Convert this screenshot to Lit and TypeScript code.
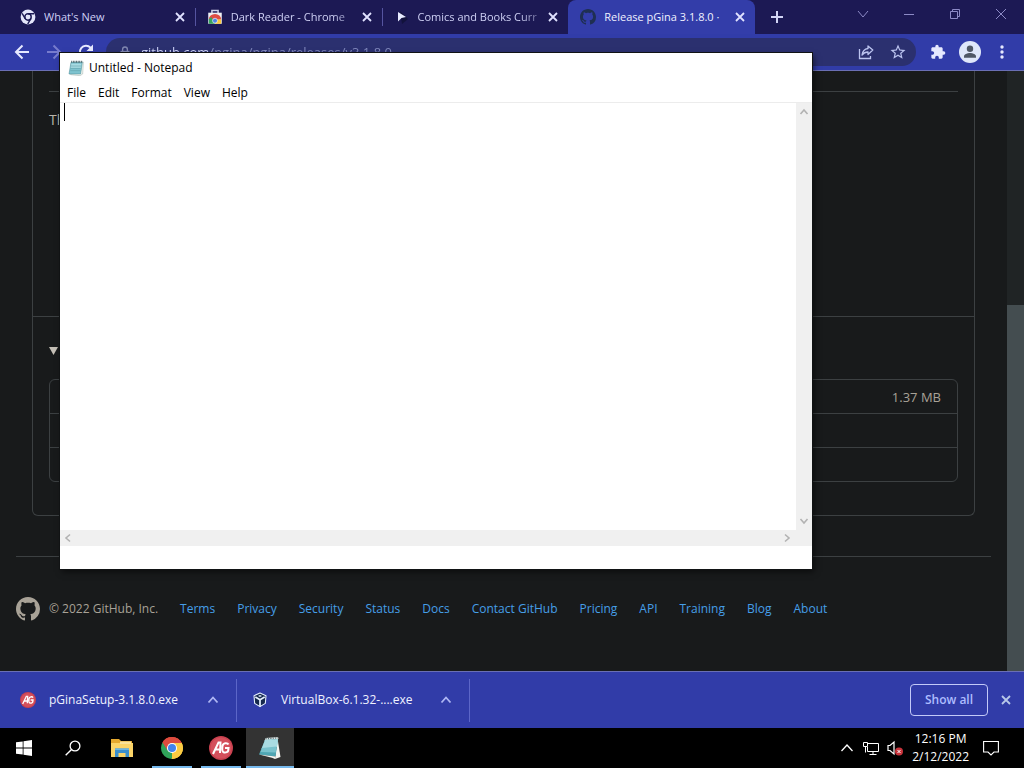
import { LitElement, html, css, svg, nothing } from "lit";
import { customElement, property } from "lit/decorators.js";
import { classMap } from "lit/directives/class-map.js";

const octocat = svg`<path fill="currentColor" fill-rule="evenodd" d="M8 0C3.58 0 0 3.58 0 8c0 3.54 2.29 6.53 5.47 7.59.4.07.55-.17.55-.38 0-.19-.01-.82-.01-1.49-2.01.37-2.53-.49-2.69-.94-.09-.23-.48-.94-.82-1.13-.28-.15-.68-.52-.01-.53.63-.01 1.08.58 1.23.82.72 1.21 1.87.87 2.33.66.07-.52.28-.87.51-1.07-1.78-.2-3.64-.89-3.64-3.95 0-.87.31-1.59.82-2.15-.08-.2-.36-1.02.08-2.12 0 0 .67-.21 2.2.82.64-.18 1.32-.27 2-.27s1.36.09 2 .27c1.53-1.04 2.2-.82 2.2-.82.44 1.1.16 1.92.08 2.12.51.56.82 1.27.82 2.15 0 3.07-1.87 3.75-3.65 3.95.29.25.54.73.54 1.48 0 1.07-.01 1.93-.01 2.2 0 .21.15.46.55.38A8.01 8.01 0 0 0 16 8c0-4.42-3.58-8-8-8z"/>`;

const pgina = svg`<circle cx="12" cy="12" r="12" fill="#c9414f"/><circle cx="12" cy="12" r="10.5" fill="#d4505c"/>
  <path fill="none" stroke="#fff" stroke-width="2" d="M4 18 9.5 6.5h2L11 17M6.5 13.5h5M19.5 8.500c-1-2-5.500-2-6 1.500-.3 2.500-1 6 1.500 6.500 2 .4 4-.5 4.200-2l.3-2.500h-3.500"/>`;

const notepad = svg`<path fill="#e4e8e6" d="M7.500 2 20 1l.500 2-14 2z"/>
  <path fill="#f4f5f1" d="m19.500 2.500 3 18.500-5.500 2z"/>
  <path fill="#4fa6b3" d="M7 4 20 3l-2.500 17.500L1 18.500z"/>
  <path fill="#a9dbe2" d="M7 4 20 3l-1 8-15.500 2z"/>
  <path fill="#79c2cd" d="m4 12 14.500-1.500-.8 6L2.500 16z"/>
  <path fill="#f7f7f2" d="m1 18.500 16.500 2L17 23l-3-1.200z"/>
  <path stroke="#566f75" stroke-width="1.300" stroke-dasharray="1.200 1.200" d="M7.500 2.800 20 1.800"/>`;

const pad = svg`<path fill="#fbfbf4" stroke="#9bb0ae" stroke-width=".8" d="m5 4 18-1-1 18-4 2.500L4 22z"/>
  <path fill="#7fc3cf" stroke="#4d8e99" stroke-width=".8" d="M4.500 3.500h17L19 21H1.500z"/>
  <path fill="#a8dbe3" d="M5 5.500h15L19 12H4z"/>
  <path stroke="#5c9aa5" stroke-width=".8" d="M4.500 9h15M4 12.500h15M3.500 16h15"/>
  <path stroke="#3d565c" stroke-width="3" stroke-dasharray="1.200 1.200" d="M5 2.500h17"/>`;

const icons: Record<string, [string, unknown]> = {
  chromeMono: ["-1 -1 26 26", svg`<circle cx="12" cy="12" r="12" fill="#e4e6fb"/><circle cx="12" cy="12" r="5.200" fill="none" stroke="#1c1a55" stroke-width="2.400"/>
    <path fill="none" stroke="#1c1a55" stroke-width="2.200" d="M12 6.700h10M7.400 14.600 2.500 6M16.500 14.700 11.500 23.500"/>`],
  chrome: ["0 0 24 24", svg`<path fill="#dd4b3e" d="M12 12 1.610 6A12 12 0 0 1 22.390 6z"/><path fill="#fbcb43" d="M12 12 22.390 6A12 12 0 0 1 12 24z"/>
    <path fill="#2fa35a" d="M12 12v12A12 12 0 0 1 1.610 6z"/><path fill="#dd4b3e" d="M12 6.500h10.650A12 12 0 0 0 1.610 6l5.630 8.750z"/>
    <path fill="#fbcb43" d="M16.760 14.750 11.440 24A12 12 0 0 0 22.650 6.500H12z"/><circle cx="12" cy="12" r="5.500" fill="#fff"/><circle cx="12" cy="12" r="4.400" fill="#4384ee"/>`],
  store: ["0 0 26 26", svg`<path fill="none" stroke="#cdd0e6" stroke-width="2.500" d="M8 7V2.500h10V7"/><path fill="#edf0f4" d="M2 6h22v18H2z"/>
    <path fill="#de4c43" d="M3 17a10 9 0 0 1 20 0l-10 1z"/><path fill="#fac93c" d="M13 17h10v7H13z"/><path fill="#36a45d" d="M3 16.500 7 13l6 11H3z"/><circle cx="13" cy="19" r="4" fill="#4e86e4" stroke="#fff"/>`],
  cursor: ["0 0 16 16", svg`<path fill="#12123c" d="m6 2 8 8-6 5z"/><path fill="#e8ebff" d="m4 3 8 5-4.500 1L4 12.500z"/>`],
  octocat: ["0 0 16 16", octocat],
  close: ["0 0 16 16", svg`<path fill="none" stroke="currentColor" stroke-width="1.800" d="m4 4 8 8m0-8-8 8"/>`],
  plus: ["0 0 16 16", svg`<path fill="none" stroke="currentColor" stroke-width="2" d="M8 2v12M2 8h12"/>`],
  down: ["0 0 16 16", svg`<path fill="none" stroke="currentColor" d="m3 5 5 6 5-6"/>`],
  min: ["0 0 16 16", svg`<path fill="none" stroke="currentColor" d="M3 8.500h10"/>`],
  restore: ["0 0 16 16", svg`<path fill="none" stroke="currentColor" d="M3.500 5.500h7v7h-7zM5.500 5.500v-2h7v7h-2"/>`],
  exit: ["0 0 16 16", svg`<path fill="none" stroke="currentColor" d="m3 3 10 10m0-10L3 13"/>`],
  back: ["0 0 16 16", svg`<path fill="none" stroke="currentColor" stroke-width="2" d="M15 8H2m6.500-6.500L2 8l6.500 6.500"/>`],
  forward: ["0 0 16 16", svg`<path fill="none" stroke="currentColor" stroke-width="2" d="M1 8h13M7.500 1.500 14 8l-6.500 6.500"/>`],
  reload: ["0 0 16 16", svg`<path fill="none" stroke="currentColor" stroke-width="2" d="M13.700 10.500A6.200 6.200 0 1 1 12.500 3.600L14 5.500"/><path fill="currentColor" d="M15 .5V7H8.500z"/>`],
  lock: ["0 0 16 16", svg`<path fill="none" stroke="currentColor" stroke-width="1.800" d="M4.800 7V4.500a3.200 3.200 0 0 1 6.400 0V7"/><path fill="currentColor" d="M2 6.500h12V15H2z"/>`],
  share: ["0 0 16 16", svg`<path fill="none" stroke="currentColor" stroke-width="1.300" d="M1.500 5v9.500h11V12"/><path fill="none" stroke="currentColor" stroke-width="1.300" stroke-linejoin="round" d="M10 2v2.500C6.500 5 4.500 7.500 4 11c1.500-2 3.500-3 6-3v2.500L14.800 6z"/>`],
  star: ["0 0 24 24", svg`<path fill="currentColor" d="m22 9.240-7.190-.62L12 2 9.190 8.630 2 9.240l5.460 4.730L5.820 21 12 17.270 18.180 21l-1.630-7.030zM12 15.400l-3.760 2.270 1-4.280-3.320-2.880 4.380-.38L12 6.100l1.710 4.040 4.380.38-3.320 2.880 1 4.280z"/>`],
  puzzle: ["0 0 24 24", svg`<path fill="currentColor" d="M20.500 11H19V7c0-1.100-.9-2-2-2h-4V3.500a2.500 2.500 0 0 0-5 0V5H4c-1.100 0-1.990.9-1.990 2v3.800H3.500c1.490 0 2.700 1.210 2.700 2.700s-1.210 2.700-2.700 2.700H2V20c0 1.100.9 2 2 2h3.800v-1.500c0-1.490 1.210-2.700 2.700-2.700s2.700 1.210 2.700 2.700V22H17c1.100 0 2-.9 2-2v-4h1.500a2.500 2.500 0 0 0 0-5z"/>`],
  avatar: ["0 0 22 22", svg`<circle cx="11" cy="11" r="11" fill="#dfe7fa"/><circle cx="11" cy="7.800" r="3.200" fill="#505866"/><path fill="#505866" d="M5 16.800v-1.500c0-2 3.500-3.300 6-3.300s6 1.300 6 3.300v1.500z"/>`],
  dots: ["0 0 16 16", svg`<g fill="currentColor"><circle cx="8" cy="3" r="1.700"/><circle cx="8" cy="8" r="1.700"/><circle cx="8" cy="13" r="1.700"/></g>`],
  notepad: ["0 0 24 24", notepad],
  pad: ["0 0 24 24", pad],
  pgina: ["0 0 24 24", pgina],
  box: ["0 0 24 24", svg`<path fill="#15284c" stroke="#e6efff" stroke-width="1.600" stroke-linejoin="round" d="m12 1.500 9 4-1 11.500L12 22 4 17 3 5.500z"/><path fill="none" stroke="#e6efff" stroke-width="2.600" d="m5 7.500 7 4 7-4M12 11.500V22"/><path fill="#dce8fb" d="m9 6 3-1.500L15 6l-3 1.500z"/>`],
  up: ["0 0 16 16", svg`<path fill="none" stroke="currentColor" stroke-width="1.800" d="m3.500 10.500 4.500-5 4.500 5"/>`],
  arrow: ["0 0 12 12", svg`<path fill="none" stroke="currentColor" stroke-width="1.600" d="m2.500 8 3.500-4 3.500 4"/>`],
  windows: ["0 0 16 16", svg`<path fill="#fff" d="M0 2.300 6.700 1.400V7.600H0zM7.500 1.300 16 0v7.600H7.500zM0 8.400h6.700v6.200L0 13.700zM7.500 8.400H16V16l-8.500-1.200z"/>`],
  search: ["0 0 16 16", svg`<circle cx="10" cy="6" r="4.900" fill="none" stroke="#fff" stroke-width="1.300"/><path stroke="#fff" stroke-width="1.400" d="M6.500 9.500.7 15.300"/>`],
  folder: ["0 0 22 20" , svg`<path fill="#e5a92f" d="M0 1h8l2 2h11v4H0z"/><path fill="#fbd468" d="M0 5h22v14H0z"/><path fill="#fae29a" d="M9 3.500h11V6H9z"/><path fill="#3b8fcc" d="M4 19v-8.500h14V19h-3.500v-4h-7v4z"/><path fill="#6db6e4" d="M4 10.500h14v1.500H4z"/>`],
  tray: ["0 0 16 16", svg`<path fill="none" stroke="#fff" stroke-width="1.300" d="m2.500 11 5.500-6 5.500 6"/>`],
  network: ["0 0 16 16", svg`<path fill="none" stroke="#fff" d="M5 3.500h10.500v8H4.500V7M10 11.500v3M6.500 14.500h7M.5 2.500h4v4h-4zM2.500 6.500v6"/>`],
  volume: ["0 0 16 16", svg`<path fill="none" stroke="#fff" stroke-width="1.200" d="M1 5.500h2L7 2v12l-4-3.500H1z"/><circle cx="12" cy="11.500" r="4" fill="#c8343c"/><path stroke="#fff" d="m10.500 10 3 3m0-3-3 3"/>`],
  action: ["0 0 16 16", svg`<path fill="none" stroke="#fff" stroke-width="1.100" d="M.6 1.500h14.800V12H11l-3 3-3-3H.6z"/>`],
  triangle: ["0 0 10 10", svg`<path fill="currentColor" d="M0 1h9L4.500 9z"/>`],
};

@customElement("ui-icon")
class UiIcon extends LitElement {
  @property() name = "close";
  @property({ type: Number }) size = 16;
  static styles = css`
    :host { display: inline-flex; flex: none; }
    svg { display: block; }
  `;
  render() {
    const [box, body] = icons[this.name];
    return html`<svg width=${this.size} height=${this.size} viewBox=${box} aria-hidden="true">${body}</svg>`;
  }
}

const reset = css`
  * { box-sizing: border-box; }
  button { font: inherit; color: inherit; background: none; border: 0; padding: 0; margin: 0; display: flex; align-items: center; justify-content: center; }
  a { text-decoration: none; }
`;

@customElement("browser-tabs")
class BrowserTabs extends LitElement {
  static styles = [reset, css`
    :host { display: flex; height: 34px; flex: none; padding-left: 8px; background: #1c1954; color: #ced0f4; font-size: 11px; }
    .tabs { display: flex; flex: 0 1 747px; min-width: 0; }
    .tab { position: relative; flex: 1 1 0; min-width: 0; display: flex; align-items: center; padding: 0 7px 0 12px; }
    .tab.line::after { content: ""; position: absolute; right: -1px; top: 8px; width: 1px; height: 18px; background: #5554a0; }
    .tab.active { background: #333da9; color: #f0f1ff; border-radius: 8px 8px 0 0; }
    .tab.active .fav { color: #1f2f52; }
    .title { flex: 1; min-width: 0; margin-left: 8px; overflow: hidden; white-space: nowrap; mask-image: linear-gradient(90deg, #000 80%, #0003); }
    .tab.plain .title { mask-image: none; }
    .close { color: #e0e2ff; }
    .new { width: 44px; color: #d2d4f5; }
    .controls { margin-left: auto; display: flex; padding-bottom: 6px; color: #8c8ac6; }
    .controls button { width: 46px; }
  `];
  render() {
    const tabs = [
      { icon: "chromeMono", title: "What's New", plain: true, line: true },
      { icon: "store", title: "Dark Reader - Chrome", line: true },
      { icon: "cursor", title: "Comics and Books Curr" },
      { icon: "octocat", title: "Release pGina 3.1.8.0 ·", active: true, plain: true },
    ];
    return html`
      <div class="tabs" role="tablist">
        ${tabs.map((t) => html`<div class=${classMap({ tab: true, active: !!t.active, line: !!t.line, plain: !!t.plain })} role="tab">
          <ui-icon class="fav" name=${t.icon}></ui-icon><span class="title">${t.title}</span>
          <button class="close"><ui-icon name="close"></ui-icon></button>
        </div>`)}
      </div>
      <button class="new"><ui-icon name="plus"></ui-icon></button>
      <div class="controls">${["down", "min", "restore", "exit"].map((n) => html`<button><ui-icon name=${n}></ui-icon></button>`)}</div>
    `;
  }
}

@customElement("browser-toolbar")
class BrowserToolbar extends LitElement {
  static styles = [reset, css`
    :host { box-sizing: border-box; display: flex; align-items: center; height: 37px; flex: none; padding: 0 6px; background: #313ca8; border-bottom: 1px solid #6a6fb4; color: #e6e9ff; }
    button { width: 32px; height: 32px; }
    .dim { color: #777ccd; }
    .box { flex: 1; min-width: 0; display: flex; align-items: center; height: 28px; margin: 0 6px 0 4px; padding: 0 2px 0 13px; border-radius: 14px; background: #2b306f; color: #bcc4f0; }
    .lock { color: #8087b0; }
    .address { flex: 1; min-width: 0; margin-left: 10px; padding: 0; border: 0; outline: 0; font: inherit; font-size: 13px; line-height: 20px; color: transparent;
      background: linear-gradient(90deg, #d0d6fa 71px, #8289bd 71px); background-clip: text; -webkit-background-clip: text; }
  `];
  render() {
    return html`
      <button><ui-icon name="back"></ui-icon></button>
      <button class="dim"><ui-icon name="forward"></ui-icon></button>
      <button><ui-icon name="reload"></ui-icon></button>
      <div class="box">
        <ui-icon class="lock" name="lock" size="12"></ui-icon>
        <input class="address" type="text" aria-label="Address" .value=${"github.com/pgina/pgina/releases/v3.1.8.0"}>
        <button><ui-icon name="share"></ui-icon></button>
        <button><ui-icon name="star" size="18"></ui-icon></button>
      </div>
      <button><ui-icon name="puzzle"></ui-icon></button>
      <button><ui-icon name="avatar" size="22"></ui-icon></button>
      <button><ui-icon name="dots"></ui-icon></button>
    `;
  }
}

@customElement("release-page")
class ReleasePage extends LitElement {
  static styles = [reset, css`
    :host { display: flex; flex: 1; min-height: 0; overflow: hidden; background: #181a1b; color: #a8a297; }
    .page { flex: 1; min-width: 0; padding: 0 16px; }
    .card { margin: 0 16px; border: 1px solid #3c4042; border-top: 0; border-radius: 0 0 6px 6px; }
    .notes { height: 246px; padding: 20px 16px 0; border-bottom: 1px solid #3c4042; }
    .rule { height: 1px; background: #3c4042; margin-bottom: 18px; }
    .text { margin: 0; font-size: 14px; line-height: 20px; color: #b8b3aa; }
    .assets { padding: 24px 16px 33px; }
    summary { display: flex; align-items: center; height: 20px; margin-bottom: 18px; color: #c4bfb6; }
    table { width: 100%; border: 1px solid #3c4042; border-radius: 6px; border-spacing: 0; font-size: 13px; }
    td { height: 33px; padding: 0 16px; text-align: right; }
    tr + tr td { height: 34px; border-top: 1px solid #3c4042; }
    footer { display: flex; align-items: center; gap: 22px; margin-top: 40px; padding-top: 40px; border-top: 1px solid #3c4042; white-space: nowrap; }
    .copy { display: flex; align-items: center; gap: 9px; }
    a { color: #469fe8; }
    .scroll { width: 17px; background: #202425; display: flex; align-items: flex-end; }
    .thumb { width: 100%; height: 61%; background: #444d50; }
  `];
  render() {
    const links = ["Terms", "Privacy", "Security", "Status", "Docs", "Contact GitHub", "Pricing", "API", "Training", "Blog", "About"];
    return html`
      <div class="page">
        <section class="card">
          <div class="notes"><div class="rule"></div><p class="text">Th</p></div>
          <details class="assets" open>
            <summary><ui-icon name="triangle" size="10"></ui-icon></summary>
            <table><tbody>${["1.37 MB", "", ""].map((s) => html`<tr><td>${s || nothing}</td></tr>`)}</tbody></table>
          </details>
        </section>
        <footer>
          <span class="copy"><ui-icon name="octocat" size="24"></ui-icon>© 2022 GitHub, Inc.</span>
          ${links.map((l) => html`<a href="#">${l}</a>`)}
        </footer>
      </div>
      <div class="scroll"><div class="thumb"></div></div>
    `;
  }
}

@customElement("download-bar")
class DownloadBar extends LitElement {
  static styles = [reset, css`
    :host { box-sizing: border-box; display: flex; align-items: center; flex: none; height: 57px; padding-right: 10px; background: #313ca8; border-top: 1px solid #6a6fb4; color: #f0f2ff; }
    .item { display: flex; align-items: center; width: 233px; height: 43px; padding: 0 15px; border-right: 1px solid #5c66c8; }
    .item:first-child { width: 237px; padding-left: 20px; }
    .name { flex: 1; margin-left: 13px; }
    .more { color: #b0b8f4; }
    .all { margin-left: auto; width: 78px; height: 32px; border: 1px solid #c3caf8; border-radius: 4px; color: #aebcff; font-weight: 600; }
    .close { margin-left: 10px; color: #b8c8e8; }
  `];
  render() {
    const files = [["pgina", "pGinaSetup-3.1.8.0.exe"], ["box", "VirtualBox-6.1.32-....exe"]];
    return html`
      ${files.map(([icon, name]) => html`<div class="item"><ui-icon name=${icon}></ui-icon><span class="name">${name}</span>
        <button class="more"><ui-icon name="up"></ui-icon></button></div>`)}
      <button class="all">Show all</button>
      <button class="close"><ui-icon name="close"></ui-icon></button>
    `;
  }
}

@customElement("task-bar")
class TaskBar extends LitElement {
  static styles = [reset, css`
    :host { display: flex; flex: none; height: 40px; background: #000; color: #fff; }
    .app { width: 48px; border: solid transparent; border-width: 2px 0; }
    .app + .app { margin-left: 1px; }
    .app.running { border-bottom-color: #76b9ed; }
    .app.run { width: 40px; margin-left: 6px; }
    .app.run + .run { margin-left: 9px; }
    .app.focus { margin-left: 5px; background: #333; }
    .tray { margin-left: auto; display: flex; align-items: center; gap: 8px; padding-right: 25px; }
    .clock { margin: 0 6px 0 1px; line-height: 18px; text-align: center; }
  `];
  render() {
    const apps = [["windows", "", 16], ["search", "", 16], ["folder", "", 22], ["chrome", "running run", 22], ["pgina", "running run", 24], ["notepad", "running focus", 24]];
    return html`
      ${apps.map(([n, c, s]) => html`<button class="app ${c}"><ui-icon name=${n} size=${s}></ui-icon></button>`)}
      <div class="tray">
        <ui-icon name="tray"></ui-icon><ui-icon name="network"></ui-icon><ui-icon name="volume"></ui-icon>
        <div class="clock">12:16 PM<br>2/12/2022</div>
        <ui-icon name="action"></ui-icon>
      </div>
    `;
  }
}

@customElement("notepad-window")
class NotepadWindow extends LitElement {
  static styles = [reset, css`
    :host { display: flex; flex-direction: column; background: #fff; color: #000; box-shadow: 0 0 0 1px #111314, 2px 3px 6px #0008; }
    .title { display: flex; align-items: center; gap: 5px; height: 30px; padding-left: 8px; }
    .menu { display: flex; align-items: center; gap: 12px; height: 19px; padding-left: 7px; }
    .body { flex: 1; min-height: 0; display: grid; grid-template: 1fr 16px / 1fr 16px; border-top: 1px solid #ececec; }
    textarea { grid-area: 1 / 1; width: 100%; height: 100%; border: 0; padding: 2px 4px; outline: 0; resize: none; background: #fff; font: 14px "Liberation Mono", monospace; }
    .caret { grid-area: 1 / 1; width: 1px; height: 18px; margin: 0 4px; background: #000; z-index: 1; }
    .bar { background: #f0f0f0; color: #b2b2b2; display: flex; justify-content: space-between; align-items: center; }
    .v { flex-direction: column; padding: 3px 0; }
    .h { padding: 0 3px 0 2px; }
    .flip { transform: rotate(180deg); }
    .left { transform: rotate(-90deg); }
    .right { transform: rotate(90deg); }
    .corner { background: #f0f0f0; }
    .status { height: 23px; }
  `];
  render() {
    const arrow = html`<ui-icon name="arrow" size="12"></ui-icon>`;
    return html`
      <div class="title"><ui-icon name="pad"></ui-icon>Untitled - Notepad</div>
      <div class="menu">${["File", "Edit", "Format", "View", "Help"].map((m) => html`<button>${m}</button>`)}</div>
      <div class="body">
        <textarea aria-label="Text editor"></textarea><span class="caret"></span>
        <div class="bar v"><button>${arrow}</button><button class="flip">${arrow}</button></div>
        <div class="bar h"><button class="left">${arrow}</button><button class="right">${arrow}</button></div>
        <div class="corner"></div>
      </div>
      <div class="status"></div>
    `;
  }
}

@customElement("app-root")
class AppRoot extends LitElement {
  static styles = css`
    :host { display: flex; flex-direction: column; position: relative; height: 100vh; overflow: hidden; font: 12px/18px "Open Sans", "Noto Sans", sans-serif; }
    .notepad { position: absolute; left: 60px; top: 53px; width: 752px; height: 516px; }
  `;
  render() {
    return html`
      <browser-tabs></browser-tabs>
      <browser-toolbar></browser-toolbar>
      <release-page></release-page>
      <download-bar></download-bar>
      <task-bar></task-bar>
      <notepad-window class="notepad"></notepad-window>
    `;
  }
}
